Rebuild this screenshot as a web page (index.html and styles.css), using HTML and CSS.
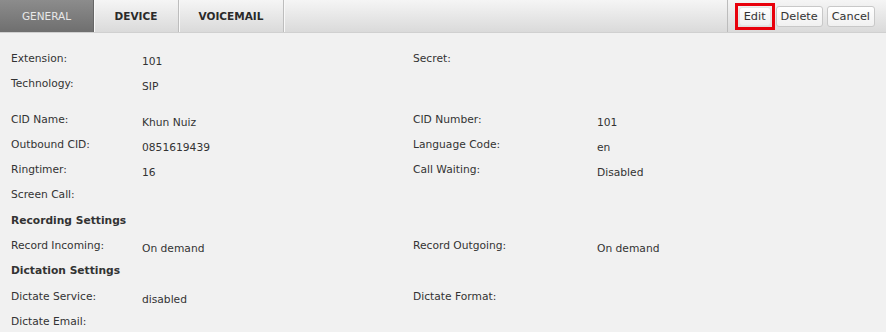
FILE: index.html
```html
<!DOCTYPE html>
<html lang="en">
<head>
    <meta charset="UTF-8">
    <title>Extension 101</title>
    <link rel="stylesheet" href="styles.css">
</head>
<body>
    <div class="toolbar">
        <ul class="tabs">
            <li class="tab active">GENERAL</li>
            <li class="tab">DEVICE</li>
            <li class="tab">VOICEMAIL</li>
        </ul>
        <div class="actions">
            <span class="highlight"><button class="btn">Edit</button></span>
            <button class="btn">Delete</button>
            <button class="btn">Cancel</button>
        </div>
    </div>

    <table class="details">
        <tr>
            <td class="label">Extension:</td><td class="value">101</td>
            <td class="label">Secret:</td><td class="value"></td>
        </tr>
        <tr>
            <td class="label">Technology:</td><td class="value">SIP</td>
            <td class="label"></td><td class="value"></td>
        </tr>
        <tr class="spacer"><td colspan="4"></td></tr>
        <tr>
            <td class="label">CID Name:</td><td class="value">Khun Nuiz</td>
            <td class="label">CID Number:</td><td class="value">101</td>
        </tr>
        <tr>
            <td class="label">Outbound CID:</td><td class="value">0851619439</td>
            <td class="label">Language Code:</td><td class="value">en</td>
        </tr>
        <tr>
            <td class="label">Ringtimer:</td><td class="value">16</td>
            <td class="label">Call Waiting:</td><td class="value">Disabled</td>
        </tr>
        <tr>
            <td class="label">Screen Call:</td><td class="value"></td>
            <td class="label"></td><td class="value"></td>
        </tr>
        <tr class="section"><td colspan="4">Recording Settings</td></tr>
        <tr>
            <td class="label">Record Incoming:</td><td class="value">On demand</td>
            <td class="label">Record Outgoing:</td><td class="value">On demand</td>
        </tr>
        <tr class="section"><td colspan="4">Dictation Settings</td></tr>
        <tr>
            <td class="label">Dictate Service:</td><td class="value">disabled</td>
            <td class="label">Dictate Format:</td><td class="value"></td>
        </tr>
        <tr>
            <td class="label">Dictate Email:</td><td class="value"></td>
            <td class="label"></td><td class="value"></td>
        </tr>
    </table>
</body>
</html>
```

FILE: styles.css
```css
body {
    margin: 0;
    padding: 0;
    background-color: #f1f1f1;
    font-family: "DejaVu Sans", Verdana, sans-serif;
    font-size: 10.7px;
    line-height: 13px;
    color: #333;
}

.toolbar {
    display: flex;
    justify-content: space-between;
    height: 32px;
    background: linear-gradient(#f5f5f5, #dadada);
    border-bottom: 1px solid #d0d0d0;
}

.tabs {
    display: flex;
    margin: 0;
    padding: 0;
    list-style: none;
}

.tab {
    display: flex;
    align-items: center;
    justify-content: center;
    border-right: 1px solid #bdbdbd;
    box-shadow: 1px 0 0 #f8f8f8;
    font-weight: bold;
    font-size: 10.5px;
    color: #2a2a2a;
}

.tab:nth-child(1) { width: 93px; }
.tab:nth-child(2) { width: 84px; }
.tab:nth-child(3) { width: 104px; }

.tab.active {
    background: linear-gradient(#8c8c8c, #6f6f6f);
    color: #e8e8e8;
    font-weight: normal;
    border-right-color: #666;
}

.actions {
    display: flex;
    align-items: center;
    gap: 4px;
    padding: 0 11px 0 7px;
    border-left: 1px solid #bcbcbc;
}

.highlight {
    display: flex;
    margin-right: -3px;
    padding: 1px;
    border: 3px solid #e8000b;
}

.btn {
    font-family: "DejaVu Sans", Verdana, sans-serif;
    font-size: 11.3px;
    color: #333;
    background: linear-gradient(#ffffff, #f0f0f0);
    border: 1px solid #c8c8c8;
    border-radius: 3px;
    height: 21px;
    padding: 0 4px;
}

.highlight .btn {
    height: 19px;
    border-color: #e4e4e4;
}

.details {
    border-collapse: collapse;
    margin-top: 19px;
}

.details tr {
    height: 25.3px;
}

.details td {
    padding: 0;
    vertical-align: top;
}

.label {
    width: 131px;
    padding-left: 11px !important;
}

.value {
    padding-top: 3px !important;
}

.details td:nth-child(2) { width: 271px; }
.details td:nth-child(3) { width: 184px; padding-left: 0 !important; }
.details td:nth-child(4) { width: 200px; }

.details tr.spacer {
    height: 10px;
}

.section td {
    padding-left: 11px !important;
    font-weight: bold;
}
```
